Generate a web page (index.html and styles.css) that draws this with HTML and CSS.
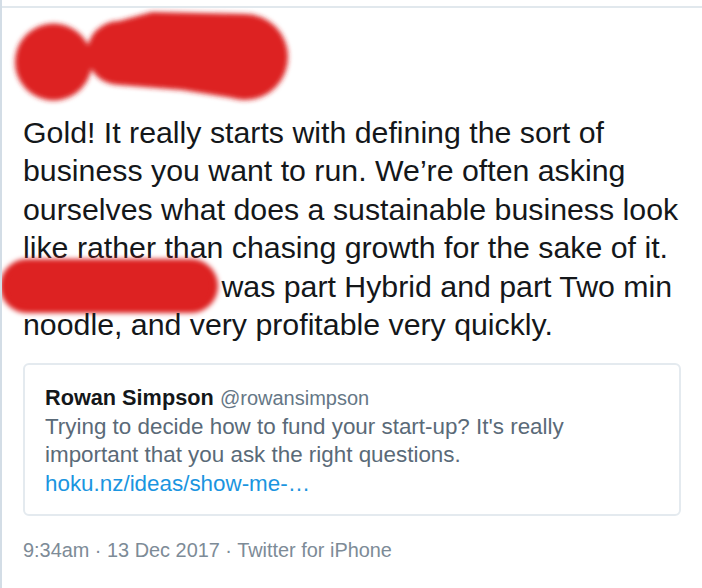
FILE: index.html
```html
<!DOCTYPE html>
<html>
<head>
<meta charset="utf-8">
<link rel="stylesheet" href="styles.css">
</head>
<body>
<div class="tweet">
  <div class="header">
    <svg class="scribble" width="300" height="106" viewBox="0 0 300 106">
      <defs>
        <filter id="soft" x="-10%" y="-10%" width="120%" height="120%">
          <feGaussianBlur stdDeviation="2.6"/>
        </filter>
      </defs>
      <g fill="#dd2222" filter="url(#soft)">
        <circle cx="51.5" cy="54" r="38.5"/>
        <circle cx="117" cy="45" r="32"/>
        <circle cx="243" cy="49" r="43"/>
        <polygon points="117,13 150,4 243,6 243,92 180,82 117,77"/>
      </g>
    </svg>
  </div>
  <p class="text">Gold! It really starts with defining the sort of<br>business you want to run. We’re often asking<br>ourselves what does a sustainable business look<br>like rather than chasing growth for the sake of it.<br><span class="redact"></span> was part Hybrid and part Two min<br>noodle, and very profitable very quickly.</p>
  <div class="quote">
    <div class="quote-head"><span class="name">Rowan Simpson</span> <span class="handle">@rowansimpson</span></div>
    <div class="quote-text">Trying to decide how to fund your start-up? It's really<br>important that you ask the right questions.<br><span class="link">hoku.nz/ideas/show-me-…</span></div>
  </div>
  <div class="meta">9:34am · 13 Dec 2017 · Twitter for iPhone</div>
</div>
</body>
</html>
```

FILE: styles.css
```css
html, body {
  margin: 0;
  padding: 0;
  background: #ffffff;
}
body {
  border-left: 2px solid #d3dde6;
  min-height: 588px;
  box-sizing: border-box;
  font-family: "Liberation Sans", Arial, Helvetica, sans-serif;
  color: #14171a;
}
.tweet {
  margin-top: 6px;
  border-top: 2px solid #e1e8ed;
  padding: 0 21px;
}
.header {
  height: 106px;
  margin-left: -21px;
}
.scribble {
  display: block;
}
.text {
  margin: 0;
  font-size: 30.3px;
  line-height: 38.4px;
  color: #14171a;
  white-space: nowrap;
}
.redact {
  display: inline-block;
  width: 200px;
  height: 36px;
  margin-left: -14px;
  margin-right: 4px;
  vertical-align: top;
  background: #dd2222;
  border-radius: 18px;
  box-shadow: 0 0 5px 9px #dd2222;
}
.quote {
  margin-top: 19px;
  border: 2px solid #e4eaef;
  border-radius: 6px;
  padding: 19px 20px 16px 20px;
  font-size: 22.4px;
  line-height: 28.5px;
}
.name {
  font-weight: bold;
  font-size: 21.7px;
  color: #14171a;
}
.handle {
  font-size: 20px;
  color: #657786;
}
.quote-text {
  color: #5a6a78;
}
.link {
  color: #1b95e0;
}
.meta {
  margin-top: 20px;
  font-size: 19.9px;
  line-height: 28px;
  color: #7d8b97;
}
```
